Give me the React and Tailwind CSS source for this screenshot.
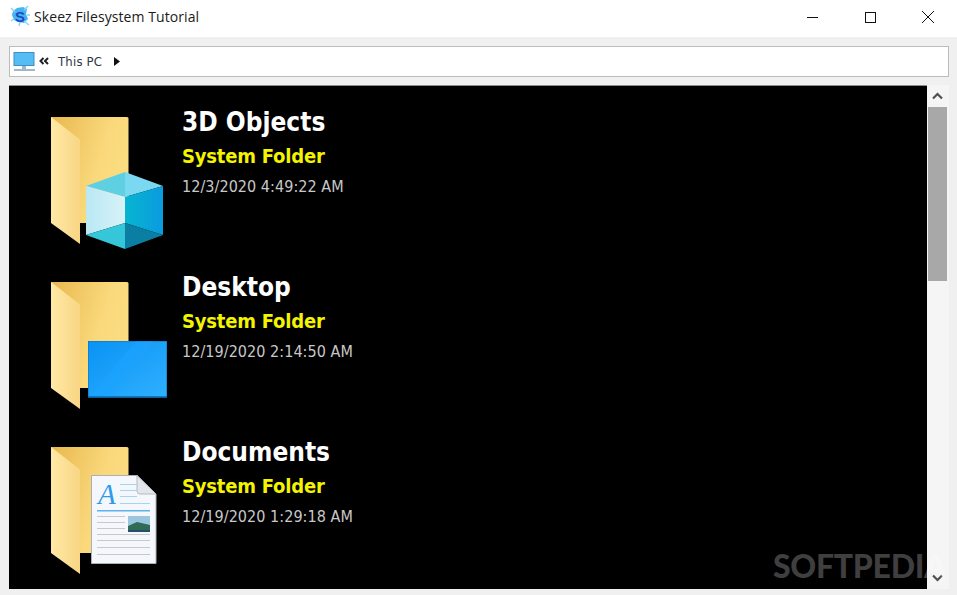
import React from "react";

function Folder({ id }) {
  return (
    <>
      <defs>
        <linearGradient id={`b${id}`} x1="0" y1="0" x2="1" y2="0.4">
          <stop offset="0" stopColor="#e8b84f" />
          <stop offset="0.7" stopColor="#fad97c" />
          <stop offset="1" stopColor="#fbdc80" />
        </linearGradient>
        <linearGradient id={`f${id}`} x1="0" y1="0" x2="1" y2="0">
          <stop offset="0" stopColor="#ffe9a6" />
          <stop offset="1" stopColor="#f8d683" />
        </linearGradient>
      </defs>
      <path d="M5 0H81a1.5 1.5 0 0 1 1.5 1.5V106H5Z" fill={`url(#b${id})`} />
      <path d="M5 0L34 22.500V127L5 106Z" fill={`url(#f${id})`} />
    </>
  );
}

function Cube() {
  return (
    <>
      <defs>
        <linearGradient id="cl" x1="0" y1="0" x2="1" y2="0">
          <stop offset="0" stopColor="#b9e8f4" />
          <stop offset="1" stopColor="#d8f2f8" />
        </linearGradient>
        <linearGradient id="cr" x1="0" y1="0" x2="1" y2="0">
          <stop offset="0" stopColor="#07b5d0" />
          <stop offset="1" stopColor="#0a9be0" />
        </linearGradient>
      </defs>
      <path d="M79 55L40 69L79 80Z" fill="#5fcfe2" />
      <path d="M79 55L117 69L79 80Z" fill="#7bd8f1" />
      <path d="M40 69L79 80V106L40 118Z" fill="url(#cl)" />
      <path d="M117 69L79 80V106L117 118Z" fill="url(#cr)" />
      <path d="M40 118L79 106V132Z" fill="#36c6da" />
      <path d="M117 118L79 106V132Z" fill="#0a7fa3" />
    </>
  );
}

function Screen() {
  return (
    <>
      <defs>
        <linearGradient id="sc" x1="0" y1="0" x2="1" y2="1">
          <stop offset="0" stopColor="#0a93f5" />
          <stop offset="1" stopColor="#2fb0ff" />
        </linearGradient>
      </defs>
      <rect x="42" y="59" width="79" height="57" fill="#0c6fb3" />
      <rect x="42.500" y="59.500" width="78" height="55" fill="url(#sc)" />
      <path d="M42.500 114.500L90 59.500H108L62 114.500Z" fill="#1aa4ff" opacity="0.6" />
      <path d="M42 114.500h79v1.500H42Z" fill="#0a5f9c" />
    </>
  );
}

function Doc() {
  return (
    <>
      <path d="M45.500 28.500H91L110 47V116.500H45.500Z" fill="#f4f7fb" stroke="#aab0b8" strokeWidth="1" />
      <path d="M91 28.500V44a3 3 0 0 0 3 3H110Z" fill="#e3e6ea" stroke="#b5bac0" />
      <text x="52" y="57" fontFamily="Liberation Serif, serif" fontStyle="italic" fontSize="29" fill="#2f9be8">A</text>
      {[37, 43, 49].map((y) => (
        <rect key={y} x="74" y={y} width="17" height="1" fill="#a9d4f0" />
      ))}
      <rect x="74" y="56" width="30" height="1" fill="#a9d4f0" />
      <rect x="51" y="63" width="53" height="1.500" fill="#5cb4ec" />
      {[69, 75, 81].map((y) => (
        <rect key={y} x="51" y={y} width="28" height="1" fill="#c9c9c9" />
      ))}
      {[87, 93, 100, 107].map((y) => (
        <rect key={y} x="51" y={y} width="53" height="1" fill="#c9c9c9" />
      ))}
      <rect x="82" y="69" width="22" height="16" fill="#9ac6e0" />
      <path d="M82 79L91 75L104 78V85H82Z" fill="#2f6b55" />
      <rect x="82" y="83" width="22" height="2" fill="#24506e" />
    </>
  );
}

const rows = [
  { name: "3D Objects", date: "12/3/2020 4:49:22 AM", overlay: <Cube /> },
  { name: "Desktop", date: "12/19/2020 2:14:50 AM", overlay: <Screen /> },
  { name: "Documents", date: "12/19/2020 1:29:18 AM", overlay: <Doc /> },
];

const tahoma = { fontFamily: '"DejaVu Sans Condensed", "DejaVu Sans", sans-serif' };

function Row({ row, i }) {
  return (
    <div className="flex h-[165px] shrink-0 pt-[31px]">
      <svg width="130" height="134" viewBox="0 0 130 134" className="ml-[37px] shrink-0">
        <Folder id={i} />
        {row.overlay}
      </svg>
      <div className="ml-[6px] flex flex-col" style={tahoma}>
        <div className="mt-[-11px] h-[28px] text-[26px] leading-[32px] font-bold text-white whitespace-nowrap">
          {row.name}
        </div>
        <div className="mt-[10px] h-[24px] text-[20px] leading-[24px] font-bold text-[#f4f400] tracking-[-0.2px] whitespace-nowrap">
          System Folder
        </div>
        <div className="mt-[10px] text-[16px] leading-[18px] tracking-[0.05px] text-[#c8c8c8] whitespace-nowrap">
          {row.date}
        </div>
      </div>
    </div>
  );
}

export default function App() {
  return (
    <div className="relative flex h-[595px] w-[957px] flex-col overflow-hidden bg-[#f0f0f0]">
      <div className="flex h-[37px] shrink-0 items-center bg-white">
        <svg width="22" height="22" viewBox="0 0 22 22" className="ml-[9px] mt-[-6px]">
          <path d="M4 6L8 3L14 2L18 4L17 9L19 14L15 18L9 17L5 15L3 10Z" fill="#45b4f2" />
          <path d="M2 3l4 4M19 1l-4 4M21 10h-3M20 20l-5-4M10 21l1-4M2 16l3-2" stroke="#8fd4f6" strokeWidth="1.500" />
          <text x="6" y="16.500" fontFamily="Liberation Sans, sans-serif" fontWeight="700" fontSize="15" fill="#1f49c4">S</text>
        </svg>
        <span
          className="ml-[3px] mt-[-5px] text-[14px] tracking-[0.08px] text-[#1a1a1a] whitespace-nowrap"
          style={{ fontFamily: '"Open Sans", sans-serif' }}
        >
          Skeez Filesystem Tutorial
        </span>
        <div className="ml-auto flex h-full">
          <div className="flex w-[58px] items-center justify-center pb-[3px]">
            <div className="h-px w-[11px] bg-[#111]" />
          </div>
          <div className="flex w-[58px] items-center justify-center pb-[3px]">
            <div className="h-[11px] w-[11px] border border-[#111]" />
          </div>
          <div className="flex w-[58px] items-center justify-center pb-[3px]">
            <svg width="12" height="12" viewBox="0 0 12 12">
              <path d="M0 0L12 12M12 0L0 12" stroke="#111" strokeWidth="1" />
            </svg>
          </div>
        </div>
      </div>

      <div className="ml-[9px] mr-[8px] mt-[9px] flex h-[31px] shrink-0 items-center border border-[#bcbcbc] bg-white">
        <svg width="23" height="20" viewBox="0 0 23 20" className="ml-[3px]">
          <rect x="1" y="0.500" width="20" height="13" fill="#55bdf4" stroke="#3d8fc8" />
          <rect x="9" y="14" width="4" height="3" fill="#9db6c8" />
          <rect x="1" y="17" width="21" height="2" fill="#9fb8cc" />
        </svg>
        <svg width="10" height="8" viewBox="0 0 10 8" className="ml-[3px] mt-[-2px]">
          <path d="M4.500 1L1.500 4L4.500 7M9 1L6 4L9 7" fill="none" stroke="#222" strokeWidth="2" />
        </svg>
        <span className="ml-[9px] text-[13px] tracking-[0.2px] text-[#2f3542]" style={tahoma}>
          This PC
        </span>
        <svg width="6" height="9" viewBox="0 0 6 9" className="ml-[12px]">
          <path d="M0 0L6 4.500L0 9Z" fill="#111" />
        </svg>
      </div>

      <div className="ml-[9px] mr-[8px] mt-[8px] flex h-[504px] shrink-0">
        <div className="flex min-w-0 flex-1 flex-col overflow-hidden border-t border-[#8c8c8c] bg-black">
          {rows.map((r, i) => (
            <Row key={r.name} row={r} i={i} />
          ))}
        </div>
        <div className="flex w-[22px] shrink-0 flex-col bg-[#f5f5f5] pl-[1px] pr-[2px]">
          <div className="flex h-[22px] w-full items-center justify-center">
            <svg width="11" height="8" viewBox="0 0 11 8">
              <path d="M1 6.500L5.500 2L10 6.500" fill="none" stroke="#505050" strokeWidth="2.200" />
            </svg>
          </div>
          <div className="h-[174px] w-full bg-[#a8a8a8]" />
          <div className="flex-1" />
          <div className="flex h-[22px] w-full items-center justify-center">
            <svg width="11" height="8" viewBox="0 0 11 8">
              <path d="M1 1.500L5.500 6L10 1.500" fill="none" stroke="#505050" strokeWidth="2.200" />
            </svg>
          </div>
        </div>
      </div>

      <div
        className="absolute left-[773px] top-[547px] text-[32px] leading-[38px] font-black tracking-[-0.3px] text-white/25 whitespace-nowrap"
        style={{ fontFamily: "Lato, sans-serif" }}
      >
        SOFTPEDIA
      </div>
    </div>
  );
}
